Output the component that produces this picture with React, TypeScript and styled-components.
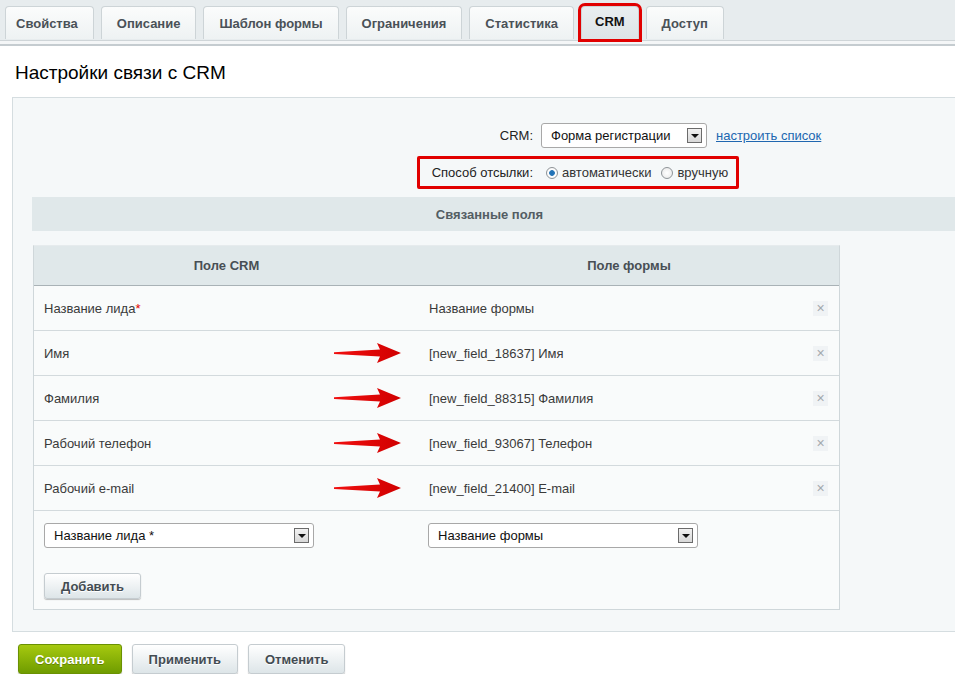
import * as React from "react";
import styled, { createGlobalStyle } from "styled-components";

const GlobalStyle = createGlobalStyle`
    html, body {
        margin: 0;
        padding: 0;
        background: #fff;
        overflow: hidden;
    }
    body {
        font-family: "Liberation Sans", Arial, sans-serif;
        font-size: 13px;
        color: #333;
    }
`;

const Page = styled.div`
    width: 955px;
`;

const TabBar = styled.div`
    display: flex;
    align-items: flex-end;
    gap: 7px;
    height: 40px;
    padding-left: 5px;
    background: #e7ecee;
`;

const Tab = styled.div<{ active?: boolean; first?: boolean }>`
    position: relative;
    z-index: ${(p) => (p.active ? 1 : 0)};
    display: flex;
    align-items: center;
    height: 33px;
    margin-bottom: 1px;
    padding: 0 ${(p) => (p.active ? 13 : 15)}px 0 ${(p) => (p.active ? 13 : p.first ? 10 : 15)}px;
    box-sizing: border-box;
    border: 1px solid #cdd4d7;
    border-bottom: none;
    border-radius: 4px 4px 0 0;
    background: ${(p) => (p.active ? "linear-gradient(#e9eef0, #dde4e7)" : "linear-gradient(#fbfcfc, #eef2f3)")};
    font-weight: bold;
    color: ${(p) => (p.active ? "#111" : "#4a5157")};
    outline: ${(p) => (p.active ? "3px solid #e10000" : "none")};
    padding-bottom: ${(p) => (p.active ? 4 : 0)}px;
`;

const TabStripe = styled.div`
    height: 3px;
    border-top: 1px solid #cfd5d8;
    border-bottom: 2px solid #c5ccd0;
    background: #f4f6f7;
`;

const Title = styled.h1`
    margin: 16px 0 13px 15px;
    font-size: 19px;
    line-height: 22px;
    font-weight: normal;
    color: #000;
`;

const Panel = styled.div`
    margin-left: 12px;
    padding: 25px 0 21px 0;
    border: 1px solid #d5dde0;
    border-right: none;
    background: #f5f8f9;
`;

const CrmRow = styled.div`
    display: flex;
    align-items: center;
    padding-left: 400px;
    height: 25px;
`;

const FieldLabel = styled.span<{ width: number }>`
    width: ${(p) => p.width}px;
    text-align: right;
    color: #222;
`;

const SelectBox = styled.div<{ width: number }>`
    display: flex;
    align-items: center;
    justify-content: space-between;
    width: ${(p) => p.width}px;
    height: 25px;
    box-sizing: border-box;
    padding: 0 4px 0 9px;
    border: 1px solid #a8a8a8;
    border-radius: 3px;
    background: #fff;
    color: #111;
`;

const SelectArrow = styled.span`
    width: 15px;
    height: 15px;
    box-sizing: border-box;
    border: 1px solid #6b6b6b;
    background: linear-gradient(#f2f2f2, #d8d8d8);
    display: flex;
    align-items: center;
    justify-content: center;
    &::after {
        content: "";
        border-left: 4px solid transparent;
        border-right: 4px solid transparent;
        border-top: 4px solid #111;
    }
`;

const Link = styled.a`
    margin-left: 9px;
    color: #2067b0;
    text-decoration: underline;
`;

const OptionsRow = styled.div`
    display: flex;
    margin: 8px 0 8px 404px;
`;

const Highlight = styled.div`
    display: flex;
    align-items: center;
    height: 27px;
    padding-right: 8px;
    border: 3px solid #e10000;
    border-radius: 2px;
`;

const Radio = styled.span<{ checked?: boolean }>`
    width: 12px;
    height: 12px;
    box-sizing: border-box;
    border-radius: 50%;
    border: 1px solid #8e9498;
    background: ${(p) =>
        p.checked
            ? "radial-gradient(circle, #1d6fb5 0, #2a78b8 2.5px, #fff 3.2px, #f1f1f1 100%)"
            : "radial-gradient(circle, #fff 0, #e6e6e6 100%)"};
    margin: 0 4px 0 ${(p) => (p.checked ? 13 : 10)}px;
`;

const SectionHeader = styled.div`
    margin-left: 19px;
    height: 34px;
    display: flex;
    align-items: center;
    justify-content: center;
    background: #e0e8ea;
    font-weight: bold;
    color: #535d63;
    padding-right: 8px;
`;

const Table = styled.div`
    margin: 14px 0 0 20px;
    width: 805px;
    border: 1px solid #cfd7da;
    border-top-color: #e6ebed;
    background: #f9fbfb;
`;

const HeadRow = styled.div`
    display: grid;
    grid-template-columns: 385px 1fr;
    height: 39px;
    border-bottom: 1px solid #a9b2b6;
    background: #e0e8ea;
`;

const HeadCell = styled.div`
    display: flex;
    align-items: center;
    justify-content: center;
    font-weight: bold;
    color: #484f55;
`;

const Row = styled.div`
    display: grid;
    grid-template-columns: 385px 1fr;
    height: 44px;
    border-bottom: 1px solid #d3dadd;
`;

const CrmCell = styled.div`
    display: flex;
    align-items: center;
    justify-content: space-between;
    padding: 0 18px 0 10px;
    color: #3a3a3a;
`;

const FormCell = styled.div`
    display: flex;
    align-items: center;
    justify-content: space-between;
    padding: 0 11px 0 10px;
    color: #3a3a3a;
`;

const Required = styled.span`
    color: #e00000;
`;

const Remove = styled.span`
    width: 15px;
    height: 15px;
    display: flex;
    align-items: center;
    justify-content: center;
    background: #f0f3f5;
    color: #a2a9ae;
    font-size: 14px;
    line-height: 1;
`;

const AddRow = styled.div`
    padding: 12px 0 10px 10px;
`;

const AddSelects = styled.div`
    display: grid;
    grid-template-columns: 384px 1fr;
`;

const Button = styled.button<{ primary?: boolean }>`
    height: 27px;
    box-sizing: border-box;
    padding: 0 16px;
    border: 1px solid ${(p) => (p.primary ? "#6a9102" : "#c5ccd0")};
    border-radius: 3px;
    background: ${(p) => (p.primary ? "linear-gradient(#a6c90f, #6f9c00)" : "linear-gradient(#ffffff, #dde5e8)")};
    box-shadow: 0 1px 1px rgba(0, 0, 0, 0.25);
    font-family: "Liberation Sans", Arial, sans-serif;
    font-size: 13px;
    font-weight: bold;
    color: ${(p) => (p.primary ? "#fff" : "#434c52")};
    text-shadow: ${(p) => (p.primary ? "0 1px 0 rgba(0,0,0,0.25)" : "0 1px 0 #fff")};
`;

const AddButton = styled(Button)`
    margin-top: 25px;
    height: 26px;
`;

const Footer = styled.div`
    display: flex;
    gap: 10px;
    padding: 12px 0 0 18px;
`;

const FooterButton = styled(Button)`
    height: 30px;
`;

function Arrow(): JSX.Element {
    return (
        <svg width="67" height="22" viewBox="0 0 67 22">
            <defs>
                <linearGradient id="arr" x1="0" x2="1" y1="0" y2="0">
                    <stop offset="0" stopColor="#f01010" />
                    <stop offset="1" stopColor="#d00000" />
                </linearGradient>
            </defs>
            <path d="M0 10.2 L46 7.6 L43 1 L67 11 L43 21 L46 14.4 L0 12 Z" fill="url(#arr)" />
        </svg>
    );
}

interface FieldLink {
    crm: string;
    form: string;
    required?: boolean;
    arrow?: boolean;
}

const links: FieldLink[] = [
    { crm: "Название лида", form: "Название формы", required: true },
    { crm: "Имя", form: "[new_field_18637] Имя", arrow: true },
    { crm: "Фамилия", form: "[new_field_88315] Фамилия", arrow: true },
    { crm: "Рабочий телефон", form: "[new_field_93067] Телефон", arrow: true },
    { crm: "Рабочий e-mail", form: "[new_field_21400] E-mail", arrow: true },
];

const tabs = ["Свойства", "Описание", "Шаблон формы", "Ограничения", "Статистика", "CRM", "Доступ"];

export default function App(): JSX.Element {
    return (
        <Page>
            <GlobalStyle />
            <TabBar>
                {tabs.map((t, i) => (
                    <Tab key={t} active={t === "CRM"} first={i === 0}>
                        {t}
                    </Tab>
                ))}
            </TabBar>
            <TabStripe />
            <Title>Настройки связи с CRM</Title>
            <Panel>
                <CrmRow>
                    <FieldLabel width={120}>CRM:</FieldLabel>
                    <span style={{ width: 8 }} />
                    <SelectBox width={166}>
                        Форма регистрации
                        <SelectArrow />
                    </SelectBox>
                    <Link href="#">настроить список</Link>
                </CrmRow>
                <OptionsRow>
                    <Highlight>
                        <FieldLabel width={113}>Способ отсылки:</FieldLabel>
                        <Radio checked />
                        <span>автоматически</span>
                        <Radio />
                        <span>вручную</span>
                    </Highlight>
                </OptionsRow>
                <SectionHeader>Связанные поля</SectionHeader>
                <Table>
                    <HeadRow>
                        <HeadCell>Поле CRM</HeadCell>
                        <HeadCell>Поле формы</HeadCell>
                    </HeadRow>
                    {links.map((l) => (
                        <Row key={l.crm}>
                            <CrmCell>
                                <span>
                                    {l.crm}
                                    {l.required && <Required>*</Required>}
                                </span>
                                {l.arrow && <Arrow />}
                            </CrmCell>
                            <FormCell>
                                <span>{l.form}</span>
                                <Remove>×</Remove>
                            </FormCell>
                        </Row>
                    ))}
                    <AddRow>
                        <AddSelects>
                            <SelectBox width={270}>
                                Название лида *
                                <SelectArrow />
                            </SelectBox>
                            <SelectBox width={270}>
                                Название формы
                                <SelectArrow />
                            </SelectBox>
                        </AddSelects>
                        <AddButton>Добавить</AddButton>
                    </AddRow>
                </Table>
            </Panel>
            <Footer>
                <FooterButton primary>Сохранить</FooterButton>
                <FooterButton>Применить</FooterButton>
                <FooterButton>Отменить</FooterButton>
            </Footer>
        </Page>
    );
}
